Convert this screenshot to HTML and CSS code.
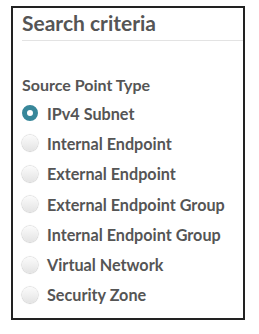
FILE: index.html
```html
<!DOCTYPE html>
<html lang="en">
<head>
    <meta charset="UTF-8">
    <meta name="viewport" content="width=device-width, initial-scale=1.0">
    <title>Search criteria</title>
    <link rel="stylesheet" href="styles.css">
</head>
<body>
    <div class="panel">
        <h2 class="panel-title">Search criteria</h2>

        <form id="SearchCriteria">
            <div class="field-label">Source Point Type</div>
            <label class="radio-row"><input type="radio" name="sourceType" value="ipv4" checked><span class="dot"></span>IPv4 Subnet</label>
            <label class="radio-row"><input type="radio" name="sourceType" value="internal"><span class="dot"></span>Internal Endpoint</label>
            <label class="radio-row"><input type="radio" name="sourceType" value="external"><span class="dot"></span>External Endpoint</label>
            <label class="radio-row"><input type="radio" name="sourceType" value="externalGroup"><span class="dot"></span>External Endpoint Group</label>
            <label class="radio-row"><input type="radio" name="sourceType" value="internalGroup"><span class="dot"></span>Internal Endpoint Group</label>
            <label class="radio-row"><input type="radio" name="sourceType" value="vnet"><span class="dot"></span>Virtual Network</label>
            <label class="radio-row"><input type="radio" name="sourceType" value="zone"><span class="dot"></span>Security Zone</label>
        </form>
    </div>
</body>
</html>
```

FILE: styles.css
```css
body {
    margin: 0;
    background-color: #fff;
    font-family: Lato, "Open Sans", sans-serif;
    color: #555;
}

.panel {
    margin: 6px 0 0 11px;
    width: 221px;
    height: 310px;
    border: 2px solid #222;
    padding: 0 0 0 9px;
}

.panel-title {
    margin: 0;
    padding: 3px 0 5px 0;
    font-size: 21px;
    font-weight: 700;
    line-height: 24px;
    border-bottom: 1px solid #e3e3e3;
}

.field-label {
    margin-top: 34px;
    margin-bottom: 3px;
    font-size: 16px;
    font-weight: 700;
    line-height: 20px;
}

.radio-row {
    display: flex;
    align-items: center;
    height: 30.3px;
    font-size: 16.2px;
    font-weight: 700;
    cursor: pointer;
}

.radio-row input {
    display: none;
}

.dot {
    width: 16px;
    height: 16px;
    margin: 0 9px 0 0;
    border-radius: 50%;
    background: linear-gradient(#fbfbfb, #e4e4e4);
    box-shadow: 0 0 1px 0.5px rgba(0, 0, 0, 0.22), 0 1px 1px rgba(0, 0, 0, 0.08);
    box-sizing: border-box;
}

.radio-row input:checked + .dot {
    background: #fff;
    border: 5px solid #38879a;
    box-shadow: none;
}
```
